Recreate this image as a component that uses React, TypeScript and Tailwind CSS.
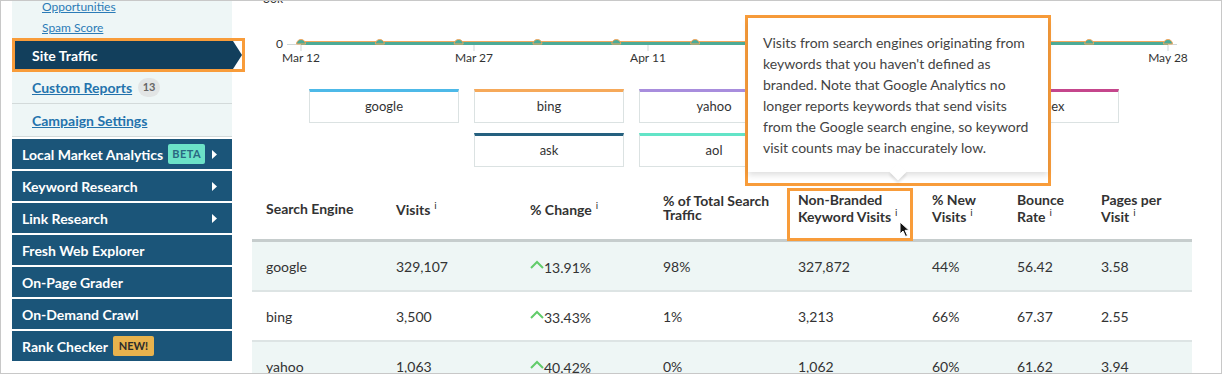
import React from "react";

const Sup = () => <sup className="text-[10px] font-normal ml-[4px] relative -top-[6px]">i</sup>;

function DarkItem({ label, badge, arrow }: { label: string; badge?: "beta" | "new"; arrow?: boolean }) {
  return (
    <div className="h-[30px] shrink-0 bg-[#1b5579] flex items-center justify-between pl-[10px] pr-[15px]">
      <div className="flex items-center">
        <span className="text-white font-bold text-[14px]">{label}</span>
        {badge === "beta" && (
          <span className="ml-[5px] h-[20px] w-[37px] flex items-center justify-center rounded-[2px] bg-[#6ce2c7] text-[#2a6882] text-[11px] font-bold tracking-[0.5px]">
            BETA
          </span>
        )}
        {badge === "new" && (
          <span className="ml-[5px] h-[20px] w-[41px] flex items-center justify-center rounded-[2px] bg-[#e8b24d] text-[#2b2b2b] text-[11px] font-bold">
            NEW!
          </span>
        )}
      </div>
      {arrow && (
        <svg width="5" height="9" viewBox="0 0 5 9">
          <polygon points="0,0 5,4.5 0,9" fill="#ffffff" />
        </svg>
      )}
    </div>
  );
}

function Legend({ label, color }: { label: string; color: string }) {
  return (
    <div
      className="w-[150px] h-[34px] border border-[#dbe2e2] border-t-[3px] flex items-center justify-center text-[13px] text-[#333]"
      style={{ borderTopColor: color }}
    >
      {label}
    </div>
  );
}

function Chart() {
  const ticks = [
    { x: 49, l: "Mar 12" },
    { x: 222, l: "Mar 27" },
    { x: 396, l: "Apr 11" },
    { x: 916, l: "May 28" },
  ];
  const dots = Array.from({ length: 12 }, (_, i) => 49 + (867 / 11) * i);
  return (
    <svg width="940" height="80" viewBox="0 0 940 80" className="block shrink-0 w-[940px] h-[80px] max-w-none">
      <text x="31" y="2" textAnchor="end" fontSize="12" fill="#333" fontFamily="Lato, sans-serif">30k</text>
      <text x="31" y="46.5" textAnchor="end" fontSize="12" fill="#333" fontFamily="Lato, sans-serif">0</text>
      <line x1="35" y1="43.5" x2="925" y2="43.5" stroke="#cfd7d7" strokeWidth="1" />
      {ticks.map((t) => (
        <g key={t.l}>
          <line x1={t.x} y1="43" x2={t.x} y2="50" stroke="#cfd7d7" strokeWidth="1" />
          <text x={t.x} y="61" textAnchor="middle" fontSize="12" fill="#333" fontFamily="Lato, sans-serif">
            {t.l}
          </text>
        </g>
      ))}
      <line x1="49" y1="40.8" x2="916" y2="40.8" stroke="#f3a65c" strokeWidth="1.8" />
      <line x1="49" y1="42.5" x2="916" y2="42.5" stroke="#4cab97" strokeWidth="3" />
      {dots.map((x, i) => (
        <path
          key={i}
          d={`M ${x - 4.5} 43 A 4.5 4.5 0 0 1 ${x + 4.5} 43 Z`}
          fill="#4cab97"
          stroke="#f3a65c"
          strokeWidth="1"
        />
      ))}
    </svg>
  );
}

const cols = "grid grid-cols-[130px_134px_133px_135px_134px_85px_84px_105px]";

const rows = [
  { e: "google", v: "329,107", c: "13.91%", t: "98%", n: "327,872", nv: "44%", b: "56.42", p: "3.58", bg: "bg-[#eef6f5]" },
  { e: "bing", v: "3,500", c: "33.43%", t: "1%", n: "3,213", nv: "66%", b: "67.37", p: "2.55", bg: "bg-white" },
  { e: "yahoo", v: "1,063", c: "40.42%", t: "0%", n: "1,062", nv: "60%", b: "61.62", p: "3.94", bg: "bg-[#eef6f5]" },
];

export default function App() {
  return (
    <div className="w-[1224px] h-[375px] bg-white overflow-hidden font-['Lato',sans-serif]">
      <div className="relative w-[1222px] h-[374px] border border-[#c8c8c8] overflow-hidden flex items-start">
        {/* Sidebar */}
        <div className="ml-[11px] w-[220px] shrink-0 flex flex-col">
          <div className="shrink-0 bg-[#eef6f6] border-b border-[#d3dada] -mt-[5px]">
            <div className="h-[21px] flex items-center pl-[30px] text-[12px] text-[#2b7bb7] underline">Opportunities</div>
            <div className="h-[21px] flex items-center pl-[30px] text-[12px] text-[#2b7bb7] underline">Spam Score</div>
            <div className="relative h-[34px] bg-white">
              <div className="absolute left-[3px] top-[3px] bottom-[3px] w-[218px] bg-[#123f5c]" />
              <svg className="absolute left-[221px] top-[3px]" width="9" height="28" viewBox="0 0 9 28">
                <polygon points="0,0 9,14 0,28" fill="#123f5c" />
              </svg>
              <div className="absolute left-0 top-0 w-[233px] h-[34px] border-[3px] border-[#f89c3a]" />
              <div className="relative h-full flex items-center pl-[20px] text-white font-bold text-[14px]">Site Traffic</div>
            </div>
            <div className="h-[32px] flex items-center pl-[20px] border-b border-[#d3dada]">
              <span className="text-[14px] font-bold text-[#2473ad] underline">Custom Reports</span>
              <span className="ml-[6px] w-[22px] h-[19px] rounded-full bg-[#e2e5e5] text-[#666] text-[11px] font-bold flex items-center justify-center">
                13
              </span>
            </div>
            <div className="h-[32px] flex items-center pl-[20px]">
              <span className="text-[14px] font-bold text-[#2473ad] underline">Campaign Settings</span>
            </div>
          </div>
          <div className="shrink-0 mt-[2px] flex flex-col gap-[2px]">
            <DarkItem label="Local Market Analytics" badge="beta" arrow />
            <DarkItem label="Keyword Research" arrow />
            <DarkItem label="Link Research" arrow />
            <DarkItem label="Fresh Web Explorer" />
            <DarkItem label="On-Page Grader" />
            <DarkItem label="On-Demand Crawl" />
            <DarkItem label="Rank Checker" badge="new" />
          </div>
        </div>

        {/* Main */}
        <div className="ml-[20px] w-[940px] shrink-0 flex flex-col">
          <Chart />
          <div className="shrink-0 mt-[8px] ml-[57px] w-[810px] flex flex-wrap justify-center gap-x-[15px] gap-y-[10px]">
            <Legend label="google" color="#4db9e8" />
            <Legend label="bing" color="#f6a95a" />
            <Legend label="yahoo" color="#a88ddd" />
            <Legend label="duckduckgo" color="#8bc34a" />
            <Legend label="yandex" color="#c5468c" />
            <Legend label="ask" color="#25607f" />
            <Legend label="aol" color="#63e4c7" />
            <Legend label="baidu" color="#e05b5b" />
          </div>

          <div className="shrink-0 mt-[13px] relative">
            <div className={`${cols} h-[62px] pb-[3px] items-center border-b-[3px] border-[#c6cdcd] text-[14px] font-bold text-[#333] leading-[17px]`}>
              <div className="pl-[14px]">Search Engine</div>
              <div className="pl-[14px] pt-[3px]">Visits<Sup /></div>
              <div className="pl-[14px] pt-[3px]">% Change<Sup /></div>
              <div className="pl-[14px] leading-[14px]">% of Total Search<br />Traffic</div>
              <div className="pl-[14px]">Non-Branded<br />Keyword Visits<Sup /></div>
              <div className="pl-[14px]">% New<br />Visits<Sup /></div>
              <div className="pl-[14px]">Bounce<br />Rate<Sup /></div>
              <div className="pl-[14px]">Pages per<br />Visit<Sup /></div>
            </div>
            <div className="absolute left-[535px] top-[8px] w-[126px] h-[53px] border-[3px] border-[#f89c3a]" />
            <svg className="absolute left-[647px] top-[41px]" width="12" height="17" viewBox="0 0 12 17">
              <path d="M1 1 L1 13 L4 10 L6.5 15.5 L8.5 14.6 L6.1 9.3 L10 9.3 Z" fill="#111" stroke="#fff" strokeWidth="1" />
            </svg>
            {rows.map((r) => (
              <div key={r.e} className={`${cols} h-[50px] items-center border-b-2 border-[#dde4e4] text-[14px] text-[#333] ${r.bg}`}>
                <div className="pl-[14px]">{r.e}</div>
                <div className="pl-[14px]">{r.v}</div>
                <div className="pl-[14px] flex items-center">
                  <svg width="14" height="9" viewBox="0 0 14 9" className="-mt-[3px]">
                    <polyline points="1,8 7,2 13,8" fill="none" stroke="#62cc6a" strokeWidth="2" />
                  </svg>
                  <span className="mt-[2px]">{r.c}</span>
                </div>
                <div className="pl-[14px]">{r.t}</div>
                <div className="pl-[14px]">{r.n}</div>
                <div className="pl-[14px]">{r.nv}</div>
                <div className="pl-[14px]">{r.b}</div>
                <div className="pl-[14px]">{r.p}</div>
              </div>
            ))}
          </div>
        </div>

        {/* Tooltip */}
        <div className="absolute left-[744px] top-[14px] w-[306px] h-[171px] border-[3px] border-[#f89c3a] bg-white">
          <div className="relative h-[154px] bg-white shadow-[0_3px_6px_rgba(0,0,0,0.13)] pt-[14px] pl-[15px] text-[14px] leading-[21px] text-[#444]">
            <div>Visits from search engines originating from</div>
            <div>keywords that you haven't defined as</div>
            <div>branded. Note that Google Analytics no</div>
            <div>longer reports keywords that send visits</div>
            <div>from the Google search engine, so keyword</div>
            <div>visit counts may be inaccurately low.</div>
            <div className="absolute left-[144px] -bottom-[6px] w-[12px] h-[12px] bg-white rotate-45 shadow-[2px_2px_3px_rgba(0,0,0,0.12)]" />
          </div>
        </div>
      </div>
    </div>
  );
}
